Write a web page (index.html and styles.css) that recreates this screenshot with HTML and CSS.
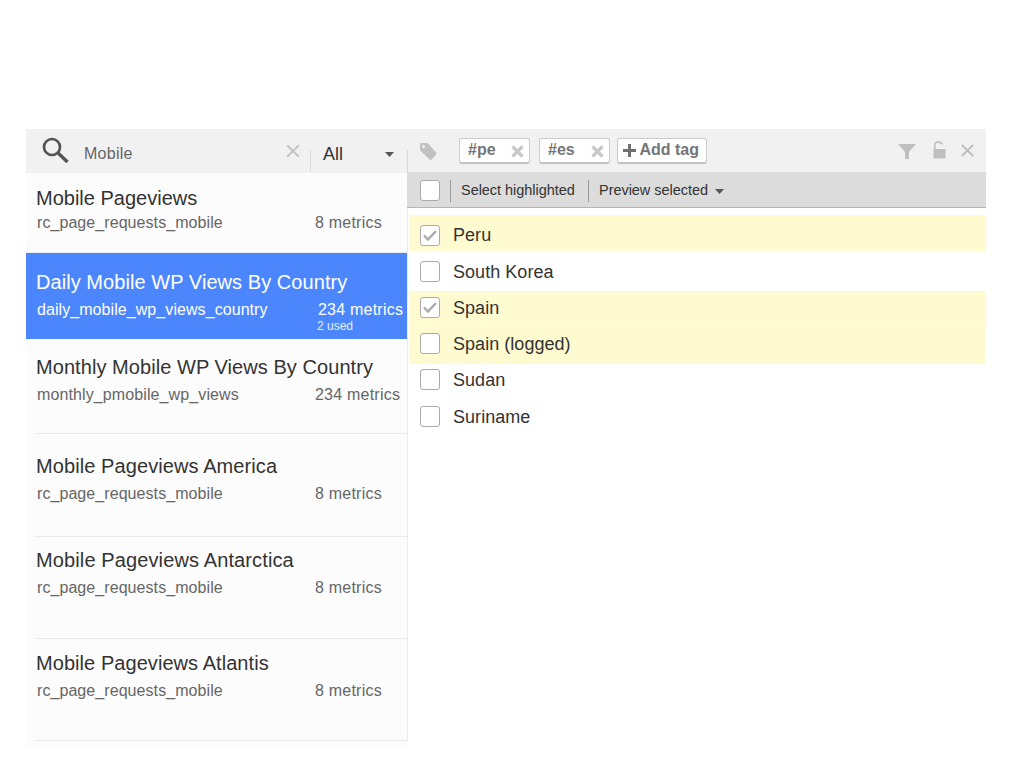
FILE: index.html
```html
<!DOCTYPE html>
<html lang="en">
<head>
<meta charset="utf-8">
<title>Metrics</title>
<link rel="stylesheet" href="styles.css">
</head>
<body>
<div class="panel">
  <aside class="sidebar">
    <div class="search">
      <svg class="search-icon" width="28" height="28" viewBox="0 0 28 28"><circle cx="10" cy="10" r="8" fill="none" stroke="#555" stroke-width="2.7"/><path d="M15.5 15.500L25.500 25" stroke="#555" stroke-width="3.4"/></svg>
      <span class="query">Mobile</span>
      <svg class="clear" width="14" height="14" viewBox="0 0 14 14"><path d="M1.300 1.300L12.700 12.700M12.700 1.300L1.300 12.700" stroke="#bfbfbf" stroke-width="1.8"/></svg>
      <div class="filter"><span>All</span><svg width="9" height="5" viewBox="0 0 9 5"><path d="M0 0H9L4.500 5Z" fill="#555"/></svg></div>
    </div>
    <div class="list">
      <div class="item first"><div class="title">Mobile Pageviews</div><div class="meta"><span class="name">rc_page_requests_mobile</span><span class="count">8 metrics</span></div></div>
      <div class="item selected"><div class="title">Daily Mobile WP Views By Country</div><div class="meta"><span class="name">daily_mobile_wp_views_country</span><span class="count">234 metrics</span></div><div class="used">2 used</div></div>
      <div class="item monthly"><div class="title">Monthly Mobile WP Views By Country</div><div class="meta"><span class="name">monthly_pmobile_wp_views</span><span class="count">234 metrics</span></div></div>
      <div class="item america"><div class="title">Mobile Pageviews America</div><div class="meta"><span class="name">rc_page_requests_mobile</span><span class="count">8 metrics</span></div></div>
      <div class="item antarctica"><div class="title">Mobile Pageviews Antarctica</div><div class="meta"><span class="name">rc_page_requests_mobile</span><span class="count">8 metrics</span></div></div>
      <div class="item atlantis"><div class="title">Mobile Pageviews Atlantis</div><div class="meta"><span class="name">rc_page_requests_mobile</span><span class="count">8 metrics</span></div></div>
    </div>
  </aside>
  <main class="content">
    <div class="tags">
      <svg class="tag-icon" width="17" height="18" viewBox="0 0 17 18"><path fill-rule="evenodd" d="M0 1.500Q0 0 1.500 0H6.500Q7.500 0 8.300 .8L16 9.500Q17 10.700 16 11.700L11.500 16.500Q10.500 17.500 9.500 16.500L.8 8Q0 7.200 0 6ZM3.600 2A1.600 1.600 0 1 0 3.600 5.200A1.600 1.600 0 1 0 3.600 2Z" fill="#c1c1c1"/></svg>
      <div class="tag"><span>#pe</span><svg width="13" height="13" viewBox="0 0 13 13"><path d="M1.500 1.500L11.500 11.500M11.500 1.500L1.500 11.500" stroke="#c8c8c8" stroke-width="3.300"/></svg></div>
      <div class="tag"><span>#es</span><svg width="13" height="13" viewBox="0 0 13 13"><path d="M1.500 1.500L11.500 11.500M11.500 1.500L1.500 11.500" stroke="#c8c8c8" stroke-width="3.300"/></svg></div>
      <div class="tag add"><svg width="13" height="13" viewBox="0 0 13 13"><path d="M6.500 0V13M0 6.500H13" stroke="#6f6f6f" stroke-width="3"/></svg><span>Add tag</span></div>
      <div class="actions">
        <svg width="18" height="15" viewBox="0 0 18 15"><path d="M0 0H18L11 8V15H7V8Z" fill="#bfbfbf"/></svg>
        <svg class="lock" width="13" height="18" viewBox="0 0 13 18"><path d="M1.800 8V4.500Q1.800 1 5.200 1Q8.500 1 9.300 3.500" fill="none" stroke="#c4c4c4" stroke-width="1.800"/><path d="M.5 8H12.500V17.500H.5Z" fill="#bfbfbf"/></svg>
        <svg width="13" height="13" viewBox="0 0 13 13"><path d="M.8 .8L12.200 12.200M12.200 .8L.8 12.200" stroke="#bcbcbc" stroke-width="1.900"/></svg>
      </div>
    </div>
    <div class="toolbar">
      <span class="box"></span>
      <div class="tool highlight">Select highlighted</div>
      <div class="tool preview">Preview selected<svg width="9" height="5" viewBox="0 0 9 5"><path d="M0 0H9L4.500 5Z" fill="#555"/></svg></div>
    </div>
    <div class="rows">
      <div class="row hot peru"><span class="box"><svg width="14" height="12" viewBox="0 0 14 12"><path d="M1 5.500L5 9.500L13 1" fill="none" stroke="#aaa" stroke-width="2.400"/></svg></span><span class="label">Peru</span></div>
      <div class="row korea"><span class="box"></span><span class="label">South Korea</span></div>
      <div class="row hot spain"><span class="box"><svg width="14" height="12" viewBox="0 0 14 12"><path d="M1 5.500L5 9.500L13 1" fill="none" stroke="#aaa" stroke-width="2.400"/></svg></span><span class="label">Spain</span></div>
      <div class="row hot logged"><span class="box"></span><span class="label">Spain (logged)</span></div>
      <div class="row sudan"><span class="box"></span><span class="label">Sudan</span></div>
      <div class="row suriname"><span class="box"></span><span class="label">Suriname</span></div>
    </div>
  </main>
</div>
</body>
</html>
```
FILE: styles.css
```css
* { box-sizing: border-box; }
body { margin: 0; background: #fff; font-family: "Liberation Sans", Arial, sans-serif; color: #333; }
svg { display: block; flex: none; }
.panel { display: flex; width: 960px; height: 617px; margin: 129px 0 0 26px; }

.sidebar { width: 382px; background: #fcfcfc; flex: none; }
.search { display: flex; align-items: flex-start; height: 44px; background: #f1f1f1; }
.search-icon { margin: 8px 0 0 16px; }
.query { width: 202px; margin: 15px 0 0 14px; font-size: 16px; line-height: 20px; letter-spacing: .25px; color: #666; }
.clear { margin: 15px 0 0; }
.filter { display: flex; width: 98px; height: 22px; margin: 21px 0 0 10px; padding-left: 12px; border: solid #d8d8d8; border-width: 0 1px; }
.filter span { width: 62px; margin-top: -7px; font-size: 18px; line-height: 22px; }
.filter svg { margin-top: 2px; }

.list { height: 568px; border-right: 1px solid #ebebeb; }
.item { padding-left: 10px; background: linear-gradient(#ebebeb, #ebebeb) 8px 100% / 100% 1px no-repeat; }
.title { font-size: 20px; line-height: 24px; letter-spacing: .06px; white-space: nowrap; }
.meta { display: flex; margin-top: 6px; padding-left: 1px; font-size: 16px; line-height: 20px; letter-spacing: .07px; color: #666; white-space: nowrap; }
.name { width: 278px; }
.count { letter-spacing: .22px; }
.used { margin-left: 281px; font-size: 12px; line-height: 14px; }
.first { height: 80px; padding-top: 13px; background-position: 0 100%; }
.first .title { letter-spacing: 0; }
.first .meta { margin-top: 3px; }
.selected { height: 86px; padding-top: 17px; background: #4b86fd; color: #fff; }
.selected .meta { color: #fff; }
.selected .name { width: 281px; }
.selected .used { margin-top: -1px; color: #e8f0ff; }
.monthly { height: 95px; padding-top: 16px; }
.monthly .name { letter-spacing: .11px; }
.america { height: 103px; padding-top: 20px; }
.america .title { letter-spacing: .09px; }
.antarctica { height: 102px; padding-top: 11px; }
.antarctica .title { letter-spacing: .12px; }
.atlantis { height: 102px; padding-top: 12px; }

.content { width: 578px; flex: none; }
.tags { display: flex; align-items: flex-start; height: 43px; background: #f1f1f1; }
.tag-icon { margin: 14px 22px 0 12px; }
.tag { display: flex; width: 71px; height: 26px; margin: 9px 9px 0 0; padding: 1px 5px 0 8px; justify-content: space-between; background: #fff; border: 1px solid #ccc; border-bottom: 2px solid #c2c2c2; border-radius: 3px; font-size: 16px; font-weight: bold; line-height: 20px; color: #757575; white-space: nowrap; }
.tag svg { margin-top: 5px; }
.add { width: 90px; margin-left: -2px; padding: 1px 7px 0 5px; }
.add svg { margin-top: 4px; }
.actions { display: flex; margin: 12px 12px 0 auto; gap: 17px; }
.actions svg { margin-top: 3px; }
.actions .lock { margin-top: 0; margin-right: -2px; }
.toolbar { display: flex; height: 36px; margin-left: -1px; padding: 8px 0 0 13px; background: #dcdcdc; border-bottom: 1px solid #b5b5b5; font-size: 14.5px; line-height: 20px; letter-spacing: -.04px; }
.box { display: flex; flex: none; align-items: center; justify-content: center; width: 20px; height: 21px; background: #fff; border: 1px solid #aaa; border-radius: 3px; }
.tool { display: flex; height: 22px; margin-left: 10px; padding-left: 10px; border-left: 1px solid #999; white-space: nowrap; }
.highlight { width: 128px; }
.preview svg { margin: 9px 0 0 7px; }
.rows { padding-top: 7px; }
.row { display: flex; height: 36px; margin-left: 1px; padding-left: 11px; font-size: 18px; line-height: 22px; letter-spacing: .04px; }
.label { margin-left: 13px; }
.hot { background: #fffbd0; }
.peru { padding-top: 10px; }
.peru .label { margin-top: -1px; }
.korea { height: 40px; padding-top: 10px; }
.spain { padding-top: 6px; }
.logged { height: 37px; padding-top: 6px; margin-right: 1px; box-shadow: inset 0 1px #fffad9; }
.sudan { padding-top: 5px; }
.suriname { padding-top: 6px; }
```
